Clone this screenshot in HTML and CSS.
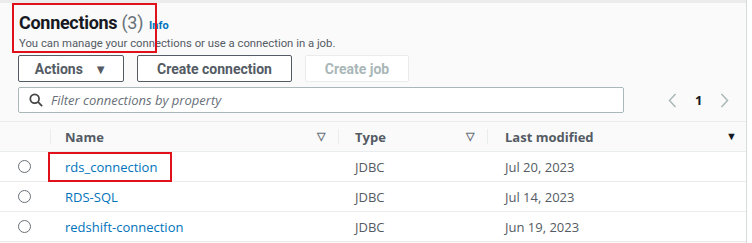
FILE: index.html
```html
<!DOCTYPE html>
<html lang="en">
<head>
    <meta charset="UTF-8">
    <title>Connections</title>
    <link rel="stylesheet" href="styles.css">
</head>
<body>
    <div id="page">
        <div class="topstrip"></div>
        <div id="content">
            <div class="header">
                <div class="title-row">
                    <h2 class="title">Connections <span class="count">(3)</span></h2>
                    <a class="info">Info</a>
                </div>
                <p class="desc">You can manage your connections or use a connection in a job.</p>
                <div class="highlight head-box"></div>
            </div>
            <div class="actions">
                <button class="btn">Actions <span class="caret">&#9660;</span></button>
                <button class="btn">Create connection</button>
                <button class="btn disabled">Create job</button>
            </div>
            <div class="filter-row">
                <div class="filter">
                    <svg class="search" width="14" height="14" viewBox="0 0 16 16">
                        <circle cx="6.5" cy="6.5" r="5" fill="none" stroke="#444" stroke-width="2"/>
                        <path d="M10.2 10.2 L15 15" stroke="#444" stroke-width="2"/>
                    </svg>
                    <span class="placeholder">Filter connections by property</span>
                </div>
                <div class="pager">
                    <svg width="9" height="15" viewBox="0 0 9 15"><path d="M7.5 1 L1.5 7.5 L7.5 14" fill="none" stroke="#aab7b8" stroke-width="1.5"/></svg>
                    <span class="page">1</span>
                    <svg width="9" height="15" viewBox="0 0 9 15"><path d="M1.5 1 L7.5 7.5 L1.5 14" fill="none" stroke="#aab7b8" stroke-width="1.5"/></svg>
                </div>
            </div>
            <table class="grid">
                <thead>
                    <tr>
                        <th class="sel"></th>
                        <th class="name">Name <span class="sort">&#9661;</span></th>
                        <th class="type">Type <span class="sort">&#9661;</span></th>
                        <th class="mod">Last modified <span class="sort active">&#9660;</span></th>
                    </tr>
                </thead>
                <tbody>
                    <tr>
                        <td class="sel"><span class="radio"></span></td>
                        <td class="name"><a>rds_connection</a><div class="highlight cell-box"></div></td>
                        <td>JDBC</td>
                        <td>Jul 20, 2023</td>
                    </tr>
                    <tr>
                        <td class="sel"><span class="radio"></span></td>
                        <td class="name"><a>RDS-SQL</a></td>
                        <td>JDBC</td>
                        <td>Jul 14, 2023</td>
                    </tr>
                    <tr>
                        <td class="sel"><span class="radio"></span></td>
                        <td class="name"><a>redshift-connection</a></td>
                        <td>JDBC</td>
                        <td>Jun 19, 2023</td>
                    </tr>
                </tbody>
            </table>
        </div>
    </div>
</body>
</html>
```
FILE: styles.css
```css
body, html {
    margin: 0;
    height: 100%;
    background-color: #fff;
    font-family: "Open Sans", "Liberation Sans", sans-serif;
    color: #16191f;
    overflow: hidden;
}

#page {
    width: 746px;
    height: 243px;
    background-color: #fafafa;
    border-right: 1px solid #d5dbdb;
}

.topstrip {
    height: 3px;
    background-color: #ececec;
}

#content {
    padding: 0 0 0 18px;
}

.header {
    position: relative;
    padding-top: 9px;
    font-family: Roboto, "Liberation Sans", sans-serif;
}

.title-row {
    display: flex;
    align-items: baseline;
    gap: 6px;
}

.title {
    margin: 0 0 0 1px;
    font-size: 18px;
    font-weight: 700;
    line-height: 22px;
    letter-spacing: -0.3px;
}

.count {
    font-weight: 400;
    color: #687078;
}

.info {
    font-size: 11px;
    font-weight: 700;
    color: #0073bb;
}

.desc {
    margin: 2px 0 0 1px;
    font-size: 11.3px;
    line-height: 16px;
    color: #545b64;
}

.highlight {
    position: absolute;
    border: 2px solid #e0111b;
}

.head-box {
    left: -6px;
    top: 0;
    width: 141px;
    height: 46px;
}

.actions {
    display: flex;
    gap: 13px;
    margin-top: 3px;
}

.btn {
    height: 27px;
    padding: 0;
    text-align: center;
    background-color: #fff;
    border: 1px solid #545b64;
    border-radius: 2px;
    font-family: Roboto, "Liberation Sans", sans-serif;
    font-size: 14px;
    font-weight: 700;
    color: #545b64;
}

.btn:first-child {
    width: 106px;
}

.btn:nth-child(2) {
    width: 155px;
}

.btn.disabled {
    width: 104px;
    border-color: #e9ebed;
    color: #aab7b8;
}

.caret {
    font-size: 13px;
    margin-left: 8px;
}

.filter-row {
    display: flex;
    align-items: center;
    margin-top: 5px;
}

.filter {
    width: 594px;
    height: 24px;
    display: flex;
    align-items: center;
    gap: 8px;
    padding-left: 10px;
    background-color: #fff;
    border: 1px solid #aab7b8;
    border-radius: 2px;
}

.placeholder {
    font-size: 13px;
    font-style: italic;
    color: #687078;
}

.pager {
    display: flex;
    align-items: center;
    margin-left: 44px;
    gap: 18px;
    font-size: 13px;
}

.page {
    font-weight: 700;
}

.grid {
    margin: 8px 0 0 -18px;
    width: 746px;
    border-collapse: collapse;
    font-size: 13px;
}

.grid th {
    height: 29px;
    padding: 0;
    text-align: left;
    font-weight: 700;
    color: #545b64;
    background-color: #fafafa;
    border-top: 1px solid #eaeded;
    border-bottom: 1px solid #eaeded;
    position: relative;
}

.grid td {
    height: 29px;
    padding: 0;
    background-color: #fff;
    border-bottom: 1px solid #eaeded;
    color: #545b64;
}

.grid th + th::before {
    content: "";
    position: absolute;
    left: 0;
    top: 7px;
    bottom: 7px;
    border-left: 1px solid #eaeded;
}

.sel {
    width: 32px;
    padding-left: 18px !important;
}

.name {
    width: 273px;
    padding-left: 15px !important;
    position: relative;
}

.type {
    width: 132px;
    padding-left: 17px !important;
}

.mod {
    padding-left: 18px !important;
}

.grid td:nth-child(3) {
    padding-left: 17px;
}

.grid td:nth-child(4) {
    padding-left: 18px;
}

.sort {
    float: right;
    margin-right: 13px;
    font-size: 11px;
    color: #687078;
}

.sort.active {
    color: #16191f;
    margin-right: 9px;
}

.radio {
    display: block;
    width: 11px;
    height: 11px;
    border: 1.5px solid #687078;
    border-radius: 50%;
}

.grid a {
    color: #0073bb;
}

.cell-box {
    left: -2px;
    top: 0;
    width: 120px;
    height: 26px;
}
```
